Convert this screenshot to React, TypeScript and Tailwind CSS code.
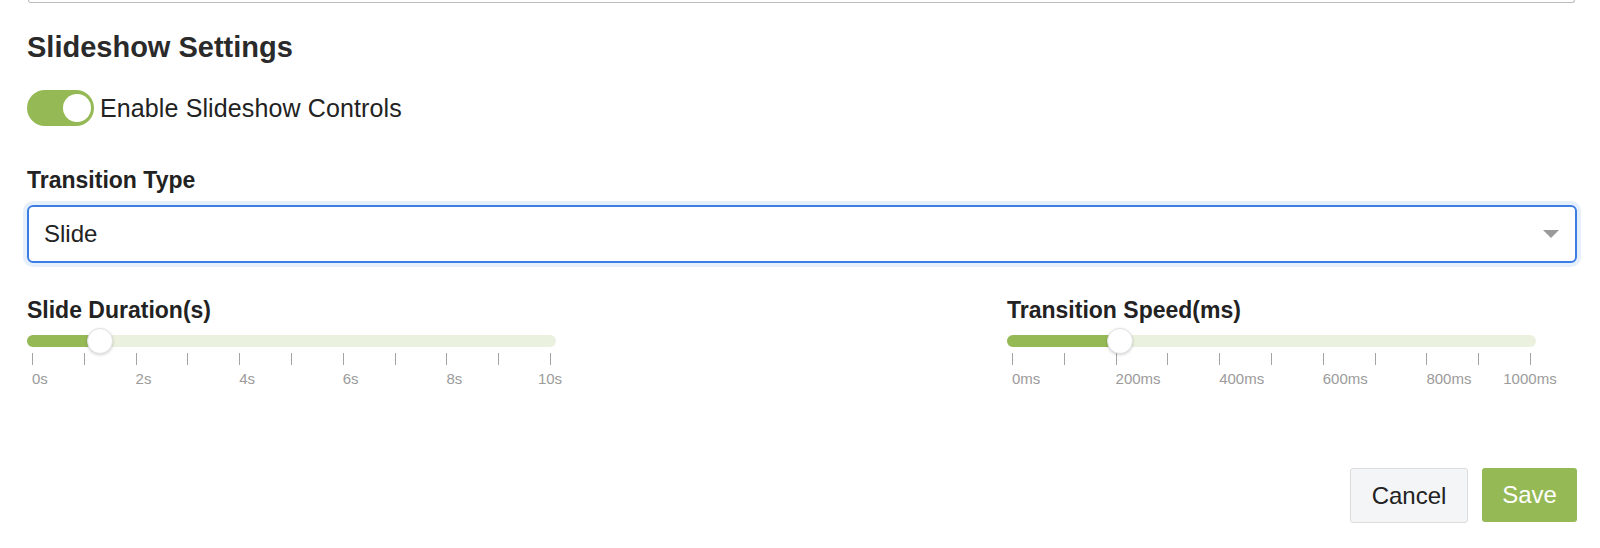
import React from "react";

type SliderProps = {
  label: string;
  ticks: string[]; // labels for every second tick
  knob: number; // px from track start to knob centre
};

function TickSlider({ label, ticks, knob }: SliderProps) {
  const tickCount = (ticks.length - 1) * 2 + 1;
  const last = ticks[ticks.length - 1];

  return (
    <div className="w-[529px]">
      <div className="text-[23px] leading-[23px] font-bold text-[#222]">{label}</div>

      {/* track */}
      <div className="relative mt-[13.5px] h-[12px] rounded-full bg-[#eaf1de]">
        <div
          className="h-full rounded-l-full bg-[#94b955]"
          style={{ width: knob }}
        />
        <div
          className="absolute top-[-7px] h-[26px] w-[26px] rounded-full border border-[#e2e2e2] bg-white shadow-[0_1px_3px_rgba(0,0,0,0.18)]"
          style={{ left: knob - 13 }}
        />
      </div>

      {/* ticks */}
      <div className="mt-[6px] flex h-[12px] justify-between px-[5px]">
        {Array.from({ length: tickCount }).map((_, i) => (
          <span key={i} className="h-full w-px bg-[#a3a3a3]" />
        ))}
      </div>

      {/* tick labels */}
      <div className="mt-[6px] flex px-[5px] text-[15px] leading-[15px] text-[#9b9b9b]">
        {ticks.slice(0, -1).map((t) => (
          <span key={t} className="w-[103.6px] shrink-0">
            {t}
          </span>
        ))}
        <span className="flex w-0 justify-center whitespace-nowrap">{last}</span>
      </div>
    </div>
  );
}

export default function App() {
  return (
    <div className="min-h-[548px] w-[1600px] bg-white pl-[27px] pr-[23px] font-['Liberation_Sans',Arial,sans-serif] text-[#222]">
      {/* bottom edge of the field above */}
      <div className="ml-px mr-[2px] h-[3px] rounded-b-[4px] border-x border-b border-[#bdbdbd]" />

      <h2 className="mt-[30px] text-[29px] leading-[28px] font-semibold text-[#2a2a2a]">
        Slideshow Settings
      </h2>

      {/* toggle */}
      <div className="mt-[29px] flex items-center">
        <button
          type="button"
          aria-pressed
          className="relative h-[36px] w-[67px] rounded-full bg-[#94b955]"
        >
          <span className="absolute right-[3px] top-[4px] h-[28px] w-[28px] rounded-full bg-white" />
        </button>
        <span className="ml-[6px] text-[25px] leading-[25px] tracking-[0.12px] text-[#222]">
          Enable Slideshow Controls
        </span>
      </div>

      {/* transition type */}
      <div className="mt-[43px] text-[23px] leading-[23px] font-bold text-[#222]">
        Transition Type
      </div>
      <div className="mt-[13px] flex h-[58px] items-center justify-between rounded-[6px] border-2 border-[#3b7de3] pl-[15px] pr-[16px] shadow-[0_0_0_4px_#e6effc]">
        <span className="text-[24px] leading-[24px] text-[#222]">Slide</span>
        <span className="h-0 w-0 border-x-[8px] border-t-[8px] border-x-transparent border-t-[#9a9a9a]" />
      </div>

      {/* sliders */}
      <div className="mt-[35.5px] flex gap-[451px]">
        <TickSlider label="Slide Duration(s)" ticks={["0s", "2s", "4s", "6s", "8s", "10s"]} knob={73} />
        <TickSlider
          label="Transition Speed(ms)"
          ticks={["0ms", "200ms", "400ms", "600ms", "800ms", "1000ms"]}
          knob={113}
        />
      </div>

      {/* actions */}
      <div className="mt-[82px] flex justify-end gap-[14px]">
        <button
          type="button"
          className="h-[55px] w-[118px] rounded-[3px] border border-[#dcdcdc] bg-[#f4f5f7] text-[24px] text-[#222]"
        >
          Cancel
        </button>
        <button
          type="button"
          className="h-[54px] w-[95px] rounded-[3px] bg-[#94b955] text-[24px] text-white"
        >
          Save
        </button>
      </div>
    </div>
  );
}
